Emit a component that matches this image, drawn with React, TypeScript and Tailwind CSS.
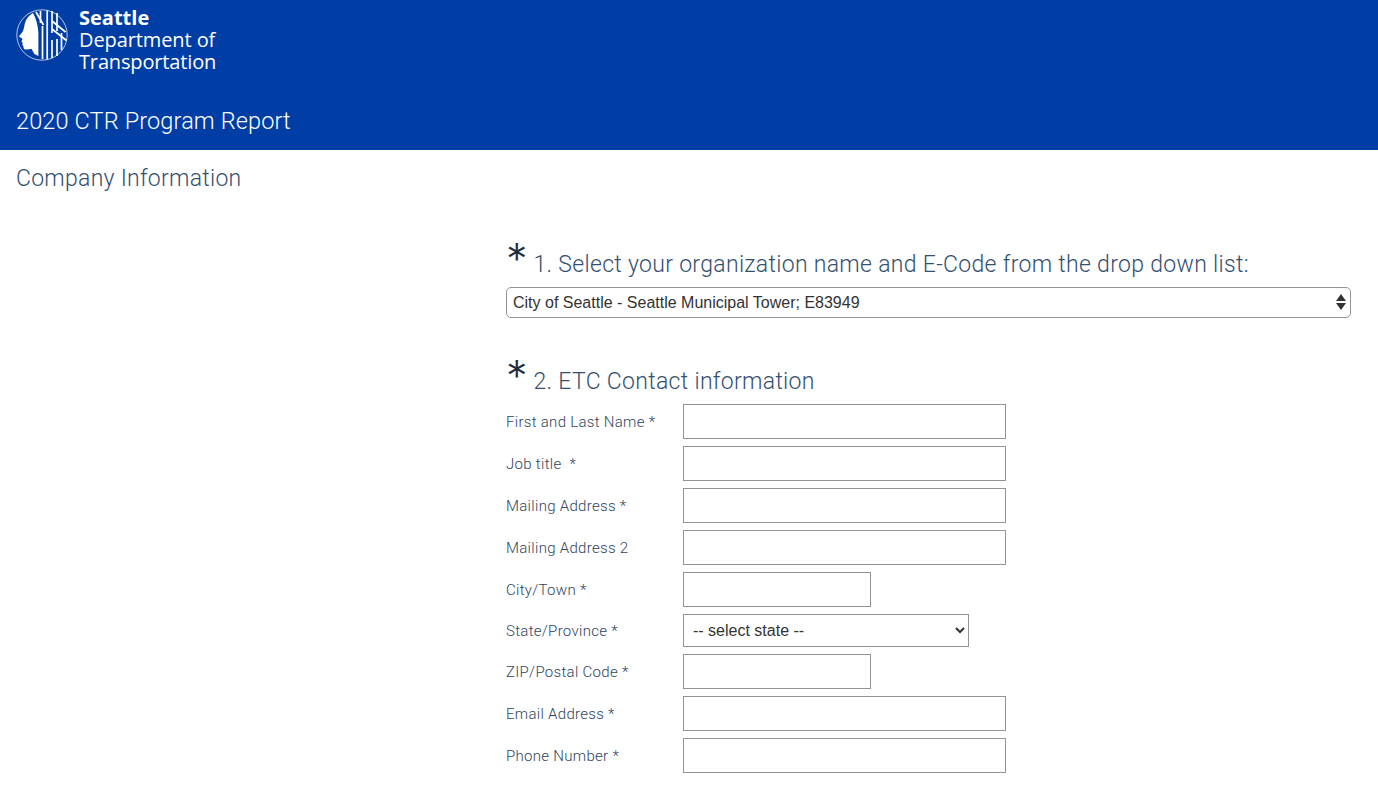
const fields = [
  { label: "First and Last Name *", width: "w-[323px]" },
  { label: "Job title  *", width: "w-[323px]" },
  { label: "Mailing Address *", width: "w-[323px]" },
  { label: "Mailing Address 2", width: "w-[323px]" },
  { label: "City/Town *", width: "w-[188px]" },
];

const fieldsAfterState = [
  { label: "ZIP/Postal Code *", width: "w-[188px]" },
  { label: "Email Address *", width: "w-[323px]" },
  { label: "Phone Number *", width: "w-[323px]" },
];

function Logo() {
  return (
    <svg viewBox="0 0 52 52" className="h-[52px] w-[52px] shrink-0" fill="none">
      <circle cx="26" cy="26" r="25.200" stroke="#fff" strokeWidth="0.700" />
      {/* face */}
      <path
        d="M17 4C12 7 9.500 11 8.500 16c-.5 3-.8 4.500-1.500 6-1 2-3 3.500-4 5.500 1 1 3 1.500 3.500 2.500-.5 1-1 2-.8 3 .5.500 1 .8 1 1.500-.5 1-.3 2 .7 2.500-.2 2 .5 3.300 2.500 3.500 2 .1 4-.3 5.500-.8l3 5.300 4 2V24C22 17 20.500 10 17 4z"
        fill="#fff"
      />
      {/* stripes */}
      <path
        d="M24.500 2v12M26.500 17v33M31.200 1.500v49M36 2v22M36 31v18M41 4v18M41 30v17M45.500 24v17"
        stroke="#fff"
        strokeWidth="1.700"
      />
      <path d="M20 3l7.500 13M36 12l13.500 11M36 20l14.500 11.500" stroke="#fff" strokeWidth="1.700" />
    </svg>
  );
}

function FieldRow({ label, width }: { label: string; width: string }) {
  return (
    <div className="flex h-[35px] items-center">
      <label className="w-[177px] whitespace-pre pt-[2px] text-[15px] font-light tracking-[0.3px] text-[#2f4560]">{label}</label>
      <input type="text" className={`h-[35px] border border-[#949494] bg-white ${width}`} />
    </div>
  );
}

function Question({ number, text }: { number: string; text: string }) {
  return (
    <h2 className="flex h-[40px] items-end whitespace-pre text-[23px] font-light leading-[32px] tracking-[0.31px] text-[#34506f]">
      <span className="mr-[6px] self-start font-['Inter',sans-serif] text-[43px] font-light leading-[36px] tracking-normal text-[#1f2d3d]">*</span>
      {number} {text}
    </h2>
  );
}

export default function App() {
  return (
    <div className="min-h-screen bg-white font-['Roboto',sans-serif]">
      <header className="flex h-[150px] flex-col justify-between bg-[#003da5] px-4 pb-[11px] pt-[9px] text-white">
        <div className="flex gap-[11px]">
          <Logo />
          <div className="-mt-[2px] font-['Open_Sans',sans-serif] text-[20px] leading-[22px]">
            <div className="font-bold">Seattle</div>
            <div className="tracking-[-0.1px]">Department of</div>
            <div className="tracking-[-0.15px]">Transportation</div>
          </div>
        </div>
        <h1 className="text-[23.500px] font-light leading-[36px] tracking-[0.13px]">2020 CTR Program Report</h1>
      </header>

      <main>
        <p className="px-4 pt-[13px] text-[23px] font-light leading-[32px] tracking-[0.27px] text-[#34506f]">Company Information</p>

        <form className="ml-[506px] mt-[46px] w-[845px]">
          <Question number="1." text="Select your organization name and E-Code from the drop down list:" />
          <div className="relative mt-[6px]">
            <select className="h-[31px] w-full appearance-none rounded-[5px] border border-[#949494] bg-white px-[6px] font-['Liberation_Sans',sans-serif] text-[16px] text-[#333]">
              <option>City of Seattle - Seattle Municipal Tower; E83949</option>
            </select>
            <svg viewBox="0 0 10 16" className="pointer-events-none absolute right-[5px] top-[7px] h-[16px] w-[10px]" fill="#333">
              <path d="M5 0l5 7H0zM5 16l-5-7h10z" />
            </svg>
          </div>

          <div className="mt-[40px]">
            <Question number="2." text="ETC Contact information" />
          </div>
          <div className="mt-[6px] flex flex-col gap-[7px]">
            {fields.map((field) => (
              <FieldRow key={field.label} {...field} />
            ))}
            <div className="flex h-[33px] items-center">
              <label className="w-[177px] pt-[2px] text-[15px] font-light tracking-[0.3px] text-[#2f4560]">State/Province *</label>
              <select className="h-[33px] w-[286px] border border-[#949494] bg-white px-[5px] font-['Liberation_Sans',sans-serif] text-[16px] text-[#333]">
                <option>-- select state --</option>
              </select>
            </div>
            {fieldsAfterState.map((field) => (
              <FieldRow key={field.label} {...field} />
            ))}
          </div>
        </form>
      </main>
    </div>
  );
}
